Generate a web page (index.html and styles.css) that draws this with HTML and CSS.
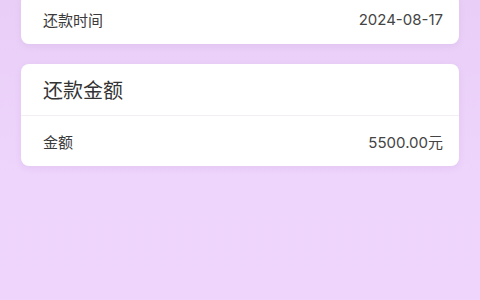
FILE: index.html
```html
<!DOCTYPE html>
<html lang="zh">
<head>
<meta charset="utf-8">
<link rel="stylesheet" href="styles.css">
</head>
<body>
<div class="page">
  <div class="card card-top">
    <div class="row"><span class="label">还款时间</span><span class="value">2024-08-17</span></div>
  </div>
  <div class="card">
    <div class="card-head">还款金额</div>
    <div class="row"><span class="label">金额</span><span class="value">5500.00元</span></div>
  </div>
</div>
</body>
</html>
```
FILE: styles.css
```css
html, body {
  margin: 0;
  padding: 0;
  height: 100%;
}
body {
  background: linear-gradient(180deg, #e9cff7 0%, #eed5fc 60%, #efd5fc 100%);
  font-family: "Noto Sans CJK SC", "Noto Sans", sans-serif;
  color: #333;
  overflow: hidden;
}
.page {
  display: flex;
  flex-direction: column;
  gap: 20px;
  padding: 0 21px;
}
.card {
  background: #fff;
  border-radius: 8px;
  box-shadow: 0 2px 6px rgba(150, 100, 180, 0.12);
}
.card-top {
  margin-top: -6px;
}
.card-head {
  height: 51px;
  display: flex;
  align-items: center;
  padding: 0 22px;
  font-size: 20px;
  color: #333;
  border-bottom: 1px solid #f2eef4;
}
.row {
  height: 50px;
  display: flex;
  align-items: center;
  justify-content: space-between;
  padding: 0 16px 0 22px;
  font-size: 15px;
  color: #3a3a3a;
}
.value {
  font-family: Inter, "Noto Sans CJK SC", sans-serif;
  color: #444;
}
```
